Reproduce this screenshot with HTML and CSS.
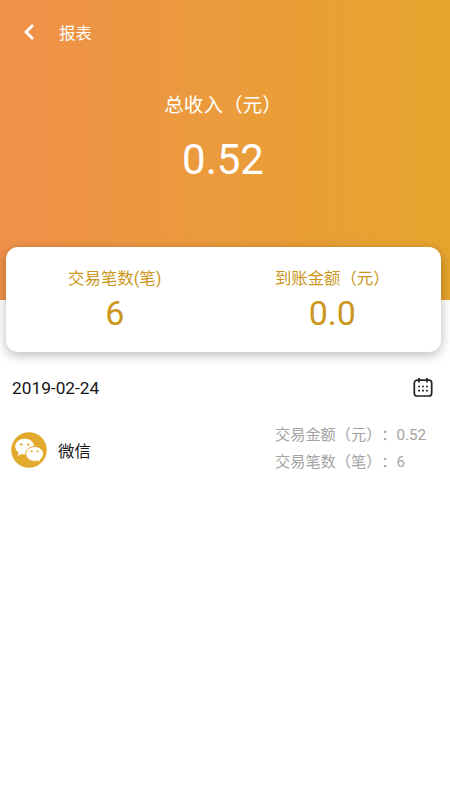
FILE: index.html
```html
<!DOCTYPE html>
<html lang="zh-CN">
<head>
<meta charset="utf-8">
<title>报表</title>
<link rel="stylesheet" href="styles.css">
</head>
<body>
<header class="hero">
  <nav class="bar">
    <svg class="back" viewBox="0 0 12 18"><path d="M10 2 3 9l7 7"/></svg>
    <h1 class="title">报表</h1>
  </nav>
  <div class="total">
    <div class="total-label">总收入（元）</div>
    <div class="total-value">0.52</div>
  </div>
</header>
<main>
  <section class="card">
    <div class="stat">
      <div class="stat-label">交易笔数(笔)</div>
      <div class="stat-value">6</div>
    </div>
    <div class="stat">
      <div class="stat-label">到账金额（元）</div>
      <div class="stat-value">0.0</div>
    </div>
  </section>
  <div class="date-row">
    <span class="date">2019-02-24</span>
    <svg class="calendar" viewBox="0 0 20 20">
      <rect x="1.3" y="2.2" width="17.4" height="15.8" rx="2.8"/>
      <path d="M6 0v4.500M14 0v4.500"/>
      <path class="days" d="M5.200 8.500h1.800M9.100 8.500h1.800M13 8.500h1.800M5.200 12.700h1.800M9.100 12.700h1.800M13 12.700h1.800"/>
    </svg>
  </div>
  <div class="channel">
    <svg class="wechat" viewBox="0 0 36 36">
      <circle class="disc" cx="18" cy="18" r="17.8"/>
      <path class="bubble" d="M13.7 6.800C8.400 6.800 4.200 10.200 4.200 14.600c0 2.500 1.300 4.600 3.500 6l-1 3.300 3.700-2c1 .3 2.100.5 3.300.5 5.300 0 9.500-3.400 9.500-7.800s-4.200-7.800-9.500-7.800z"/>
      <path class="bubble outlined" d="M23.700 14.500c-5 0-8.900 3.300-8.900 7.400s3.900 7.400 8.900 7.400c1 0 2-.1 2.900-.4l3.200 1.800-.8-2.900c2.200-1.400 3.500-3.500 3.500-5.900 0-4.100-3.900-7.400-8.800-7.400z"/>
      <g class="disc"><circle cx="10.300" cy="12.400" r="1.200"/><circle cx="17.300" cy="12.400" r="1.200"/><circle cx="20.700" cy="19.300" r="1.050"/><circle cx="26.700" cy="19.300" r="1.050"/></g>
    </svg>
    <span class="name">微信</span>
    <div class="detail">
      <div>交易金额（元）：0.52</div>
      <div>交易笔数（笔）：6</div>
    </div>
  </div>
</main>
</body>
</html>
```
FILE: styles.css
```css
* { box-sizing: border-box; }
body {
  margin: 0;
  background: #fff;
  color: #161616;
  font-family: Roboto, "Noto Sans CJK SC", sans-serif;
  text-spacing-trim: space-all;
}
.hero {
  height: 300px;
  padding-top: 16px;
  background: linear-gradient(90deg, #f0914a, #e6a52d);
  color: #fff;
}
.bar {
  display: flex;
  align-items: center;
  height: 32px;
  padding-left: 23px;
}
.back { width: 12px; height: 18px; fill: none; stroke: #fff; stroke-width: 2.8; }
.title { margin: 0 0 0 24px; padding-top: 4px; font-size: 16.4px; line-height: 32px; font-weight: 400; }
.total { width: 446px; padding-top: 43px; text-align: center; }
.total-label { font-size: 19.6px; line-height: 30px; }
.total-value { padding-top: 14px; font-size: 42px; line-height: 50px; }
.card {
  position: relative;
  display: flex;
  width: 435px;
  height: 105px;
  margin: -53px 0 0 6px;
  padding-top: 19px;
  border-radius: 12px;
  background: #fff;
  box-shadow: 0 3px 12px rgba(0, 0, 0, .28);
  color: #cb9720;
  text-align: center;
}
.stat { flex: 1; }
.stat-label { font-size: 16.4px; line-height: 26px; }
.stat-value { font-size: 34px; line-height: 42px; }
.date-row {
  display: flex;
  align-items: center;
  justify-content: space-between;
  height: 30px;
  margin-top: 21px;
  padding: 0 17px 0 12px;
}
.date { font-size: 17.3px; }
.calendar { width: 20px; height: 20px; fill: none; stroke: #222; stroke-width: 1.7; }
.calendar .days { stroke-width: 1.7; }
.channel { display: flex; align-items: center; margin-top: 18px; padding-left: 11px; height: 58px; }
.wechat { width: 36px; height: 36px; }
.disc { fill: #e2aa2c; }
.bubble { fill: #fff; }
.outlined { stroke: #e2aa2c; stroke-width: 1; }
.name { width: 217px; margin-left: 11px; font-size: 16.4px; }
.detail { padding-bottom: 2px; color: #a3a3a3; font-size: 15.2px; line-height: 27px; white-space: nowrap; }
```
